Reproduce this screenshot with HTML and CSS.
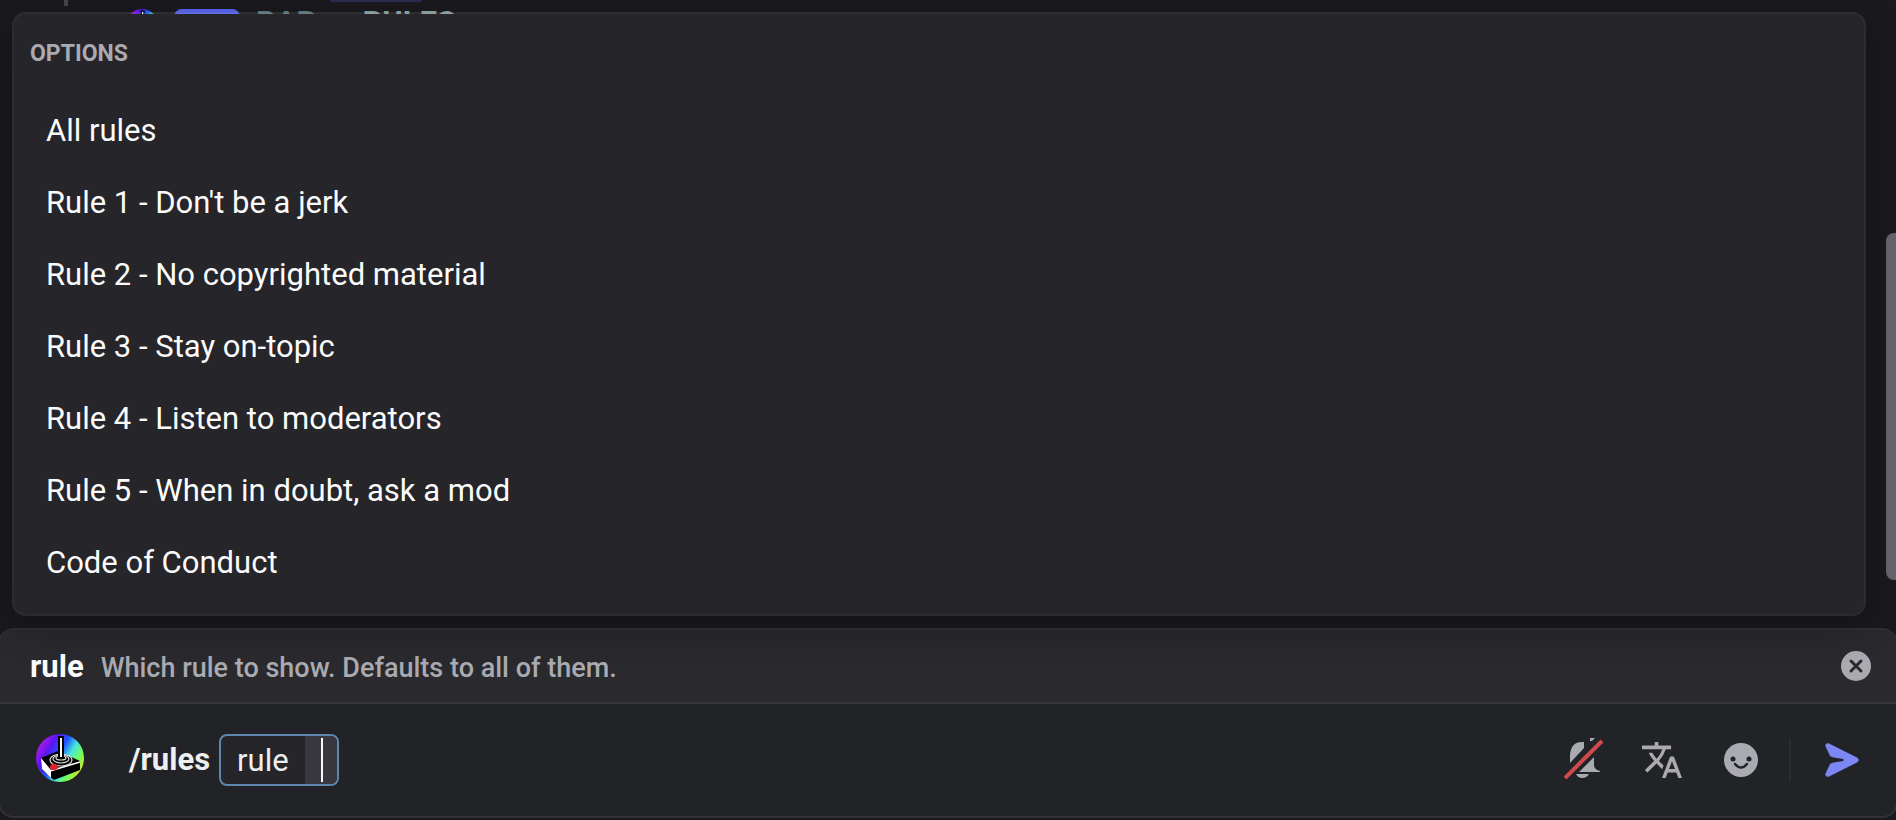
FILE: index.html
```html
<!DOCTYPE html>
<html lang="en">
<head>
    <meta charset="utf-8">
    <title>Rules command</title>
    <link rel="stylesheet" href="styles.css">
</head>
<body>
    <svg class="defs" width="0" height="0">
        <defs>
            <linearGradient id="sky" x1="0" y1="0.2" x2="1" y2="0.8">
                <stop offset="0" stop-color="#c81ee6"/>
                <stop offset="0.25" stop-color="#5a14f0"/>
                <stop offset="0.45" stop-color="#1e5aff"/>
                <stop offset="0.62" stop-color="#46e6dc"/>
                <stop offset="0.8" stop-color="#78ff50"/>
                <stop offset="1" stop-color="#ffd21e"/>
            </linearGradient>
            <symbol id="joystick" viewBox="0 0 48 48">
                <circle cx="24" cy="24" r="24" fill="url(#sky)"/>
                <path d="M5 24 L22 17 L44 27 V36 L18 46 L6 36 Z" fill="#000"/>
                <path d="M5 24 L15 36 V44 L6 35 Z" fill="#fff"/>
                <path d="M14 37 L44 28" stroke="#fff" stroke-width="1.5" fill="none"/>
                <g fill="none" stroke="#ddd" stroke-width="1.2">
                    <ellipse cx="25" cy="26" rx="11" ry="6"/>
                    <ellipse cx="25" cy="25" rx="8" ry="4"/>
                    <ellipse cx="25" cy="24" rx="5" ry="2"/>
                </g>
                <path d="M22 2 H28 V23 H22 Z" fill="#000"/>
                <path d="M24 4 H26 V23 H24 Z" fill="#fff"/>
                <ellipse cx="18" cy="33" rx="4" ry="3" fill="#e61e28"/>
            </symbol>
        </defs>
    </svg>

    <main class="channel">
        <div class="message">
            <span class="spine"></span>
            <svg class="message-avatar" aria-hidden="true"><use href="#joystick"/></svg>
            <span class="app-tag"></span>
            <span class="author">BAR</span>
            <span class="mention"></span>
            <span class="command-name">RULES</span>
        </div>
        <div class="scrollbar"></div>
    </main>

    <form class="composer">
        <section class="options">
            <h2>OPTIONS</h2>
            <ul>
                <li><button type="button">All rules</button></li>
                <li><button type="button">Rule 1 - Don't be a jerk</button></li>
                <li><button type="button">Rule 2 - No copyrighted material</button></li>
                <li><button type="button">Rule 3 - Stay on-topic</button></li>
                <li><button type="button">Rule 4 - Listen to moderators</button></li>
                <li><button type="button">Rule 5 - When in doubt, ask a mod</button></li>
                <li><button type="button">Code of Conduct</button></li>
            </ul>
        </section>

        <div class="hint">
            <strong>rule</strong>
            <span>Which rule to show. Defaults to all of them.</span>
            <button type="button" class="icon close" aria-label="Close">
                <svg width="30" height="30" viewBox="0 0 30 30">
                    <circle cx="15" cy="15" r="15" fill="#aaaab1"/>
                    <path d="M10 10 L20 20 M20 10 L10 20" stroke="#29292e" stroke-width="3" stroke-linecap="round"/>
                </svg>
            </button>
        </div>

        <div class="entry">
            <svg class="avatar" aria-hidden="true"><use href="#joystick"/></svg>
            <strong class="command">/rules</strong>
            <div class="field">
                <label for="rule">rule</label>
                <input type="text" id="rule" autocomplete="off">
            </div>
            <div class="tools">
                <button type="button" class="icon bell" aria-label="Silent typing">
                    <svg width="40" height="44" viewBox="0 0 40 44">
                        <path d="M6 25 V17 Q7 4 18 4 H20 V10 Z M26 0 H31 L28 3 H26 Z M30 19 V28 Q31 32 36 33 V34 H15 Z M12 36 H25 Q23 40 18 40 Q14 40 12 36 Z" fill="#aaaab1"/>
                        <path d="M1 40 L38 3" stroke="#cf4a4b" stroke-width="4"/>
                    </svg>
                </button>
                <button type="button" class="icon translate" aria-label="Translate">
                    <svg width="40" height="36" viewBox="1 2 22 20" preserveAspectRatio="none">
                        <path d="M12.87 15.07l-2.54-2.51.03-.03A17.52 17.52 0 0 0 14.07 6H17V4h-7V2H8v2H1v2h11.17C11.5 7.92 10.44 9.75 9 11.35 8.07 10.32 7.3 9.19 6.69 8h-2c.73 1.63 1.73 3.17 2.98 4.56l-5.09 5.02L4 19l5-5 3.11 3.11.76-2.04zM18.5 10h-2L12 22h2l1.12-3h4.75L21 22h2l-4.5-12zm-2.62 7l1.62-4.33L19.12 17h-3.24z" fill="#aaaab1"/>
                    </svg>
                </button>
                <button type="button" class="icon emoji" aria-label="Emoji">
                    <svg width="34" height="34" viewBox="0 0 34 34">
                        <circle cx="17" cy="17" r="17" fill="#aaaab1"/>
                        <circle cx="9" cy="16" r="2.5" fill="#222327"/>
                        <circle cx="25" cy="16" r="2.5" fill="#222327"/>
                        <path d="M11 21 Q17 28 23 21" fill="none" stroke="#222327" stroke-width="2.5" stroke-linecap="round"/>
                    </svg>
                </button>
                <span class="separator"></span>
                <button type="submit" class="icon send" aria-label="Send">
                    <svg width="34" height="34" viewBox="0 0 34 34">
                        <path d="M4 .4 L32 14.6 Q35.500 17 32 19.400 L4 33.600 Q.5 34.500 .3 31 L4.500 22 Q5.500 20 7.500 19.700 L18 18 Q19.500 17 18 16 L7.500 14.300 Q5.500 14 4.500 12 L.3 3 Q.5 -.5 4 .4 Z" fill="#7c87f4"/>
                    </svg>
                </button>
            </div>
        </div>
    </form>
</body>
</html>
```
FILE: styles.css
```css
* {
    box-sizing: border-box;
}
body {
    margin: 0;
    min-height: 100vh;
    display: flex;
    flex-direction: column;
    overflow: hidden;
    background-color: #1a1a1e;
    color: #fbfbfb;
    font-family: Roboto, "Liberation Sans", sans-serif;
    font-size: 31px;
    line-height: 40px;
}
button, input {
    font: inherit;
    color: inherit;
    background: none;
    border: none;
    padding: 0;
}
button {
    cursor: pointer;
}
.defs {
    position: absolute;
}

/* channel behind the popup */
.channel {
    flex: 1;
    position: relative;
}
.message {
    display: flex;
    align-items: flex-start;
    height: 50px;
    padding-left: 64px;
    font-weight: bold;
}
.spine {
    width: 4px;
    height: 6px;
    margin-right: 58px;
    background-color: #45454c;
}
.message-avatar {
    width: 32px;
    height: 32px;
    margin-top: 9px;
}
.app-tag {
    width: 66px;
    height: 30px;
    margin: 9px 16px 0;
    border-radius: 8px;
    background-color: #5865f2;
}
.author {
    margin-top: 3px;
    color: #5d7a7e;
}
.mention {
    width: 92px;
    height: 2px;
    margin: 0 -60px 0 14px;
    border-radius: 0 0 4px 4px;
    background-color: #2b2a50;
}
.command-name {
    margin-top: 3px;
    color: #8fa5a5;
}
.scrollbar {
    position: absolute;
    top: 233px;
    right: 0;
    bottom: 48px;
    width: 10px;
    border-radius: 8px 0 0 8px;
    background-color: #66656d;
}

/* option list */
.options {
    position: absolute;
    left: 12px;
    right: 30px;
    bottom: calc(100% + 14px);
    padding-bottom: 16px;
    border: 2px solid rgba(151, 151, 159, 0.16);
    border-radius: 14px;
    background-color: #25252a;
    background-clip: padding-box;
    box-shadow: 0 12px 36px rgba(0, 0, 0, 0.24);
}
.options h2 {
    margin: 0;
    padding: 20px 16px;
    font-size: 23px;
    color: #aaaab1;
}
.options ul {
    margin: 0;
    padding: 0;
    list-style: none;
}
.options button {
    display: block;
    width: 100%;
    padding: 17px 32px 15px;
    text-align: left;
}

/* message box */
.composer {
    position: relative;
    margin: 0 -2px 2px;
    border: 2px solid #313136;
    border-radius: 16px;
    background-color: #222327;
}
.hint {
    display: flex;
    align-items: baseline;
    gap: 17px;
    height: 74px;
    padding: 17px 25px 0 30px;
    border-bottom: 2px solid #36363b;
    border-radius: 14px 14px 0 0;
    background-color: #29292e;
}
.hint span {
    flex: 1;
    font-size: 27px;
    font-weight: 500;
    color: #aaaab1;
}
.close {
    align-self: flex-start;
    padding-top: 4px;
}
.entry {
    display: flex;
    align-items: center;
    height: 112px;
    padding: 0 37px 0 36px;
}
.avatar {
    width: 48px;
    height: 48px;
    margin: 0 45px 4px 0;
}
.command {
    margin-right: 9px;
    color: #efeff0;
}
.field {
    display: flex;
    height: 52px;
    overflow: hidden;
    border: 2px solid #5f86b0;
    border-radius: 8px;
    background-color: #25252a;
    color: #efeff0;
}
.field label {
    padding: 5px 16px 3px;
}
.field input {
    width: 32px;
    outline: none;
    background: linear-gradient(#fbfbfb, #fbfbfb) 16px center / 2px 44px no-repeat #38383e;
}
.icon {
    display: flex;
}
.tools {
    display: flex;
    align-items: center;
    gap: 38px;
    margin-left: auto;
}
.emoji {
    margin-left: 4px;
}
.separator {
    width: 2px;
    height: 44px;
    margin: 0 -4px 0 -7px;
    background-color: #2a2b30;
}
```
